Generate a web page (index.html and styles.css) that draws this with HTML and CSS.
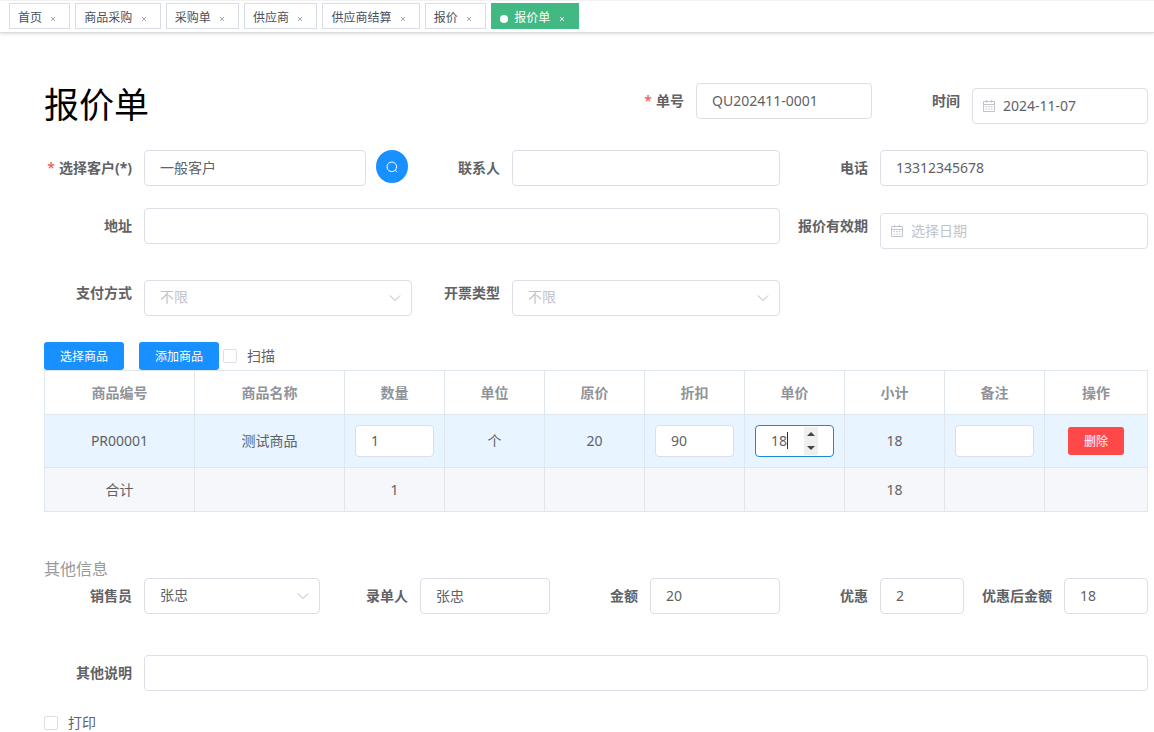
FILE: index.html
```html
<!DOCTYPE html>
<html lang="zh-CN">
<head>
<meta charset="utf-8">
<meta name="viewport" content="width=device-width, initial-scale=1">
<title>报价单</title>
<link rel="stylesheet" href="styles.css">
</head>
<body>
<nav class="tabs" aria-label="页签">
  <div class="tab"><a href="#">首页</a> <button class="tab-close" type="button" aria-label="关闭首页"><svg viewBox="0 0 6 6"><path d="M1 1l4 4M5 1L1 5"/></svg></button></div>
  <div class="tab"><a href="#">商品采购</a> <button class="tab-close" type="button" aria-label="关闭商品采购"><svg viewBox="0 0 6 6"><path d="M1 1l4 4M5 1L1 5"/></svg></button></div>
  <div class="tab"><a href="#">采购单</a> <button class="tab-close" type="button" aria-label="关闭采购单"><svg viewBox="0 0 6 6"><path d="M1 1l4 4M5 1L1 5"/></svg></button></div>
  <div class="tab"><a href="#">供应商</a> <button class="tab-close" type="button" aria-label="关闭供应商"><svg viewBox="0 0 6 6"><path d="M1 1l4 4M5 1L1 5"/></svg></button></div>
  <div class="tab"><a href="#">供应商结算</a> <button class="tab-close" type="button" aria-label="关闭供应商结算"><svg viewBox="0 0 6 6"><path d="M1 1l4 4M5 1L1 5"/></svg></button></div>
  <div class="tab"><a href="#">报价</a> <button class="tab-close" type="button" aria-label="关闭报价"><svg viewBox="0 0 6 6"><path d="M1 1l4 4M5 1L1 5"/></svg></button></div>
  <div class="tab tab--active"><a href="#" aria-current="page">报价单</a> <button class="tab-close" type="button" aria-label="关闭报价单"><svg viewBox="0 0 6 6"><path d="M1 1l4 4M5 1L1 5"/></svg></button></div>
</nav>

<main class="page">
  <form class="form">
    <div class="row">
      <h1 class="title span-12">报价单</h1>
      <div class="field span-6">
        <label class="label required" for="no">单号</label>
        <div class="control"><input class="input" id="no" type="text" value="QU202411-0001"></div>
      </div>
      <div class="field field--picker span-6">
        <label class="label" for="date">时间</label>
        <div class="control control--date">
          <svg class="icon-date" viewBox="0 0 14 14" aria-hidden="true"><path d="M1.5 2.5h11v10h-11zM1.5 5.5h11M4.5 1v2.500M9.500 1v2.500M3.500 7.500h1.500M6.300 7.500h1.500M9 7.500h1.500M3.500 10h1.500M6.300 10h1.500M9 10h1.500"/></svg>
          <input class="input" id="date" type="text" value="2024-11-07">
        </div>
      </div>
    </div>

    <div class="row">
      <div class="field span-8">
        <label class="label required" for="customer">选择客户(*)</label>
        <div class="control control--search">
          <input class="input" id="customer" type="text" value="一般客户">
          <button class="search" type="button" aria-label="查找客户"><svg viewBox="0 0 12 12"><circle cx="5.800" cy="5.800" r="4.800"/><path d="M9.200 9.200l2 2"/></svg></button>
        </div>
      </div>
      <div class="field span-8">
        <label class="label" for="contact">联系人</label>
        <div class="control"><input class="input" id="contact" type="text"></div>
      </div>
      <div class="field span-8">
        <label class="label" for="phone">电话</label>
        <div class="control"><input class="input" id="phone" type="tel" value="13312345678"></div>
      </div>
    </div>

    <div class="row">
      <div class="field span-16">
        <label class="label" for="address">地址</label>
        <div class="control"><input class="input" id="address" type="text"></div>
      </div>
      <div class="field field--picker span-8">
        <label class="label" for="valid">报价有效期</label>
        <div class="control control--date">
          <svg class="icon-date" viewBox="0 0 14 14" aria-hidden="true"><path d="M1.5 2.5h11v10h-11zM1.5 5.5h11M4.5 1v2.500M9.500 1v2.500M3.500 7.500h1.500M6.300 7.500h1.500M9 7.500h1.500M3.500 10h1.500M6.300 10h1.500M9 10h1.500"/></svg>
          <input class="input" id="valid" type="text" placeholder="选择日期">
        </div>
      </div>
    </div>

    <div class="row">
      <div class="field field--picker span-8">
        <label class="label" for="pay">支付方式</label>
        <div class="control control--select">
          <select class="input input--empty" id="pay"><option>不限</option></select>
          <svg class="chevron" viewBox="0 0 12 12" aria-hidden="true"><path d="M1 3.500l5 5 5-5"/></svg>
        </div>
      </div>
      <div class="field field--picker span-8">
        <label class="label" for="invoice">开票类型</label>
        <div class="control control--select">
          <select class="input input--empty" id="invoice"><option>不限</option></select>
          <svg class="chevron" viewBox="0 0 12 12" aria-hidden="true"><path d="M1 3.500l5 5 5-5"/></svg>
        </div>
      </div>
    </div>

    <div class="toolbar">
      <button class="btn" type="button">选择商品</button>
      <button class="btn" type="button">添加商品</button>
      <label class="check"><input type="checkbox">扫描</label>
    </div>

    <table class="goods">
      <colgroup>
        <col class="col-wide"><col class="col-wide">
        <col class="col"><col class="col"><col class="col"><col class="col"><col class="col"><col class="col"><col class="col">
        <col>
      </colgroup>
      <thead>
        <tr><th>商品编号</th><th>商品名称</th><th>数量</th><th>单位</th><th>原价</th><th>折扣</th><th>单价</th><th>小计</th><th>备注</th><th>操作</th></tr>
      </thead>
      <tbody>
        <tr>
          <td>PR00001</td>
          <td>测试商品</td>
          <td><input class="input input--small" type="text" value="1" aria-label="数量"></td>
          <td>个</td>
          <td>20</td>
          <td><input class="input input--small" type="text" value="90" aria-label="折扣"></td>
          <td>
            <div class="number">
              <input class="input input--small input--active" type="number" value="18" aria-label="单价">
              <span class="caret"></span>
              <span class="spin">
                <button type="button" aria-label="增加"><svg viewBox="0 0 8 4"><path d="M0 4l4-4 4 4z"/></svg></button>
                <button type="button" aria-label="减少"><svg viewBox="0 0 8 4"><path d="M0 0l4 4 4-4z"/></svg></button>
              </span>
            </div>
          </td>
          <td>18</td>
          <td><input class="input input--small" type="text" aria-label="备注"></td>
          <td><button class="btn btn--danger" type="button">删除</button></td>
        </tr>
      </tbody>
      <tfoot>
        <tr><td>合计</td><td></td><td>1</td><td></td><td></td><td></td><td></td><td>18</td><td></td><td></td></tr>
      </tfoot>
    </table>

    <h2 class="subtitle">其他信息</h2>
    <div class="row row--loose">
      <div class="field span-6">
        <label class="label" for="seller">销售员</label>
        <div class="control control--select">
          <select class="input" id="seller"><option>张忠</option></select>
          <svg class="chevron" viewBox="0 0 12 12" aria-hidden="true"><path d="M1 3.500l5 5 5-5"/></svg>
        </div>
      </div>
      <div class="field span-5">
        <label class="label" for="clerk">录单人</label>
        <div class="control"><input class="input" id="clerk" type="text" value="张忠"></div>
      </div>
      <div class="field span-5">
        <label class="label" for="amount">金额</label>
        <div class="control"><input class="input" id="amount" type="text" value="20"></div>
      </div>
      <div class="field span-4">
        <label class="label" for="discount">优惠</label>
        <div class="control"><input class="input" id="discount" type="text" value="2"></div>
      </div>
      <div class="field span-4">
        <label class="label" for="total">优惠后金额</label>
        <div class="control"><input class="input" id="total" type="text" value="18"></div>
      </div>
    </div>
    <div class="row">
      <div class="field span-24">
        <label class="label" for="remark">其他说明</label>
        <div class="control"><input class="input" id="remark" type="text"></div>
      </div>
    </div>
    <label class="check"><input type="checkbox">打印</label>
  </form>
</main>
</body>
</html>
```
FILE: styles.css
```css
* {
  box-sizing: border-box;
}

html {
  overflow: hidden;
}

body {
  margin: 0;
  background: #fff;
  color: #606266;
  font: 14px/20px "Noto Sans", "Noto Sans CJK SC", sans-serif;
}

button,
input,
select {
  margin: 0;
  font: inherit;
}

button {
  padding: 0;
  border: 0;
  cursor: pointer;
}

svg {
  display: block;
  fill: none;
}

/* Page tabs */
.tabs {
  display: flex;
  gap: 5px;
  padding: 2px 9px 3px;
  border-top: 1px solid #f2f2f2;
  border-bottom: 1px solid #dcdcdc;
  box-shadow: 0 1px 3px rgba(0, 0, 0, .12), 0 0 3px rgba(0, 0, 0, .04);
}

.tab {
  height: 26px;
  padding: 0 8px;
  border: 1px solid #d8dce5;
  color: #495060;
  font: 12px/28px "Liberation Sans", "Noto Sans CJK SC", sans-serif;
  white-space: nowrap;
}

.tab a {
  color: inherit;
  text-decoration: none;
}

.tab--active {
  border-color: #42b983;
  background: #42b983;
  color: #fff;
}

.tab--active::before {
  content: "";
  display: inline-block;
  width: 8px;
  height: 8px;
  margin-right: 6px;
  border-radius: 50%;
  background: #fff;
  vertical-align: -1px;
}

.tab-close {
  display: inline-grid;
  place-items: center;
  width: 16px;
  height: 16px;
  background: none;
  color: #a4a8b0;
  vertical-align: middle;
}

.tab-close svg {
  width: 6px;
  height: 6px;
  stroke: currentColor;
}

.tab--active .tab-close {
  color: #fff;
}

/* Form */
.page {
  padding: 50px 6px 0 44px;
}

.row {
  display: grid;
  grid-template-columns: repeat(24, 1fr);
  margin-bottom: 22px;
}

.row--loose {
  margin-bottom: 41px;
}

.span-4 { grid-column: span 4; }
.span-5 { grid-column: span 5; }
.span-6 { grid-column: span 6; }
.span-8 { grid-column: span 8; }
.span-12 { grid-column: span 12; }
.span-16 { grid-column: span 16; }
.span-24 { grid-column: span 24; }

.title {
  margin: 0;
  color: #000;
  font-size: 35px;
  font-weight: 400;
  line-height: 44px;
}

.field {
  display: flex;
  align-items: flex-start;
}

.label {
  flex: 0 0 100px;
  padding-right: 12px;
  font-weight: 700;
  line-height: 36px;
  text-align: right;
  white-space: nowrap;
}

.required::before {
  content: "*";
  margin-right: 4px;
  color: #f04a4a;
  font-weight: 400;
}

.control {
  position: relative;
  flex: 1;
  min-width: 0;
}

.field--picker .control {
  padding: 5px 0 4px;
}

.input {
  display: block;
  width: 100%;
  height: 36px;
  padding: 0 15px 2px;
  border: 1px solid #dcdfe6;
  border-radius: 4px;
  outline: none;
  background: #fff;
  color: #606266;
  appearance: none;
}

.input::placeholder,
.input--empty {
  color: #c0c4cc;
}

.control--date .input {
  padding-left: 30px;
}

.icon-date {
  position: absolute;
  top: 16px;
  left: 10px;
  width: 14px;
  height: 14px;
  stroke: #c0c4cc;
}

.chevron {
  position: absolute;
  right: 11px;
  bottom: 12px;
  width: 12px;
  height: 12px;
  stroke: #b4b8c0;
  pointer-events: none;
}

.field--picker .chevron {
  bottom: 16px;
}

.control--search {
  display: flex;
  gap: 10px;
  padding-right: 4px;
}

.control--search .input {
  flex: 1;
  min-width: 0;
}

.search {
  display: grid;
  place-items: center;
  width: 32px;
  height: 33px;
  border-radius: 50%;
  background: #1890ff;
}

.search svg {
  width: 12px;
  height: 12px;
  stroke: #fff;
}

/* Goods */
.toolbar {
  display: flex;
}

.btn {
  height: 28px;
  padding: 1px 16px 0;
  border-radius: 3px;
  background: #1890ff;
  color: #fff;
  font-size: 12px;
  line-height: 27px;
}

.btn + .btn {
  margin-left: 15px;
}

.btn + .check {
  margin-left: 4px;
}

.btn--danger {
  background: #ff4949;
}

.check {
  display: inline-flex;
  align-items: center;
  gap: 10px;
}

.check input {
  width: 14px;
  height: 14px;
  border: 1px solid #dcdfe6;
  border-radius: 2px;
  background: #fff;
  appearance: none;
}

.goods {
  width: 100%;
  margin-bottom: 48px;
  border-collapse: collapse;
  table-layout: fixed;
  text-align: center;
}

.col-wide { width: 150px; }
.col { width: 100px; }

.goods th,
.goods td {
  height: 44px;
  padding: 0 10px;
  border: 1px solid #dfe6ec;
}

.goods th {
  color: #909399;
}

.goods tbody td {
  height: 53px;
  background: #e8f4ff;
}

.goods tfoot td {
  background: #f5f7fa;
}

.input--small {
  height: 32px;
}

.input--active {
  border-color: #1e88d8;
}

.number {
  position: relative;
}

.number input::-webkit-inner-spin-button {
  display: none;
}

.caret {
  position: absolute;
  top: 7px;
  left: 32px;
  width: 1px;
  height: 17px;
  background: #303133;
}

.spin {
  position: absolute;
  top: 2px;
  right: 16px;
  display: grid;
  width: 14px;
  height: 28px;
}

.spin button {
  display: grid;
  place-items: center;
  background: #efefef;
}

.spin svg {
  width: 8px;
  height: 4px;
  fill: #444;
}

.subtitle {
  margin: 0;
  color: #999;
  font-size: 16px;
  font-weight: 400;
  line-height: 18px;
}
```
